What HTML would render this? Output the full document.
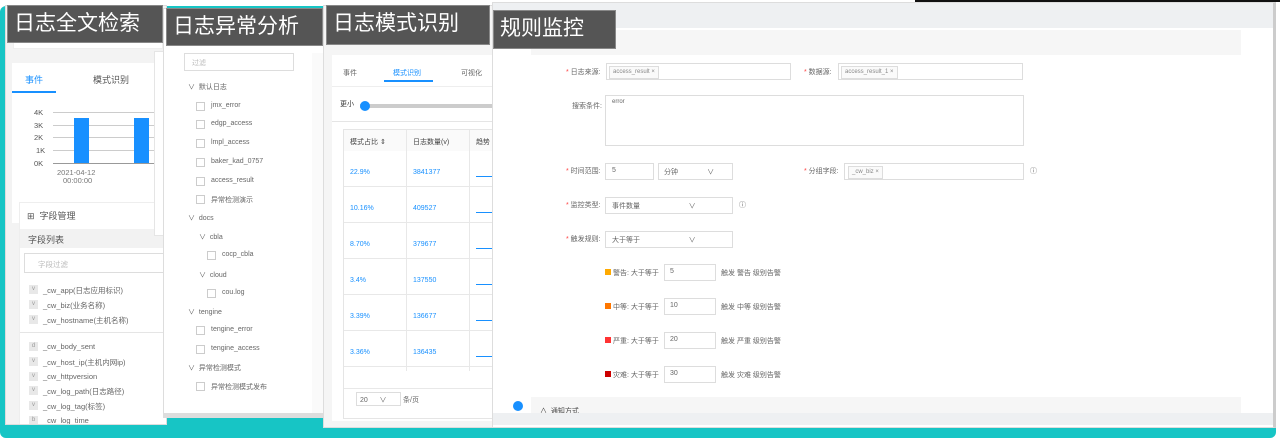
<!DOCTYPE html>
<html><head><meta charset="utf-8"><style>
*{margin:0;padding:0;box-sizing:border-box}
body{width:1280px;height:442px;position:relative;overflow:hidden;background:#fff;font-family:"Liberation Sans","Noto Sans CJK SC",sans-serif;font-size:7px;color:#666}
.a{position:absolute}
.lbl{position:absolute;background:#555;color:#fff;font-size:21px;line-height:36px;padding-left:6px;border:1px solid #888;white-space:nowrap;overflow:hidden}
.pn{position:absolute;background:#fff;overflow:hidden;border:1px solid #ddd}
.t{position:absolute;white-space:nowrap}
.cb{position:absolute;width:9px;height:9px;border:1px solid #ccc;background:#fff}
.inp{position:absolute;border:1px solid #ddd;background:#fff}
.tag{position:absolute;border:1px solid #ddd;background:#fafafa;font-size:6px;padding:0 3px;line-height:11px;color:#888}
.red{color:#f44}
.bd{position:absolute;width:9px;height:9px;background:#e8e8e8;color:#999;font-size:6px;text-align:center;line-height:9px}
.fl .t{font-size:7.5px}
</style></head><body>
<div class="a" style="left:0;top:6px;width:1276px;height:432px;background:#17c5c5;border-radius:6px"></div>
<div class="a" style="left:915px;top:0;width:365px;height:2px;background:#111"></div>

<!-- panel 1 -->
<div class="pn fl" style="left:5px;top:5px;width:162px;height:420px;background:#f3f3f3">
  <div class="a" style="left:7px;top:23px;width:150px;height:20px;background:#fff;border:1px solid #eee"></div>
  <div class="a" style="left:6px;top:57px;width:150px;height:160px;background:#fff"></div>
  <div class="t" style="left:19px;top:67px;color:#1890ff;font-size:9px">事件</div>
  <div class="t" style="left:87px;top:67px;font-size:9px;color:#555">模式识别</div>
  <div class="a" style="left:6px;top:85px;width:44px;height:2px;background:#1890ff"></div>
  <div class="t" style="left:28px;top:102px;color:#555">4K</div>
  <div class="t" style="left:28px;top:115px;color:#555">3K</div>
  <div class="t" style="left:28px;top:127px;color:#555">2K</div>
  <div class="t" style="left:30px;top:140px;color:#555">1K</div>
  <div class="t" style="left:28px;top:153px;color:#555">0K</div>
  <div class="a" style="left:47px;top:106px;width:110px;height:1px;background:#ccc"></div>
  <div class="a" style="left:47px;top:119px;width:110px;height:1px;background:#ccc"></div>
  <div class="a" style="left:47px;top:131px;width:110px;height:1px;background:#ccc"></div>
  <div class="a" style="left:47px;top:144px;width:110px;height:1px;background:#ccc"></div>
  <div class="a" style="left:47px;top:157px;width:110px;height:1px;background:#999"></div>
  <div class="a" style="left:68px;top:112px;width:15px;height:45px;background:#1890ff"></div>
  <div class="a" style="left:128px;top:112px;width:15px;height:45px;background:#1890ff"></div>
  <div class="t" style="left:51px;top:162px;color:#777">2021-04-12</div>
  <div class="t" style="left:57px;top:170px;color:#777">00:00:00</div>
  <div class="a" style="left:13px;top:196px;width:150px;height:224px;background:#fff;border:1px solid #eee"></div>
  <div class="t" style="left:21px;top:203px;font-size:9px;color:#555">⊞ &nbsp;字段管理</div>
  <div class="a" style="left:14px;top:223px;width:150px;height:19px;background:#f2f2f2"></div>
  <div class="t" style="left:22px;top:227px;font-size:9px;color:#555">字段列表</div>
  <div class="inp" style="left:18px;top:247px;width:150px;height:20px"></div>
  <div class="t" style="left:32px;top:253px;color:#bbb">字段过滤</div>
  <div class="bd" style="left:23px;top:279px">v</div><div class="t" style="left:37px;top:279px">_cw_app(日志应用标识)</div>
  <div class="bd" style="left:23px;top:294px">v</div><div class="t" style="left:37px;top:294px">_cw_biz(业务名称)</div>
  <div class="bd" style="left:23px;top:309px">v</div><div class="t" style="left:37px;top:309px">_cw_hostname(主机名称)</div>
  <div class="a" style="left:14px;top:326px;width:150px;height:1px;background:#e5e5e5"></div>
  <div class="bd" style="left:23px;top:336px">d</div><div class="t" style="left:37px;top:336px">_cw_body_sent</div>
  <div class="bd" style="left:23px;top:351px">v</div><div class="t" style="left:37px;top:351px">_cw_host_ip(主机内网ip)</div>
  <div class="bd" style="left:23px;top:366px">v</div><div class="t" style="left:37px;top:366px">_cw_httpversion</div>
  <div class="bd" style="left:23px;top:380px">v</div><div class="t" style="left:37px;top:380px">_cw_log_path(日志路径)</div>
  <div class="bd" style="left:23px;top:395px">v</div><div class="t" style="left:37px;top:395px">_cw_log_tag(标签)</div>
  <div class="bd" style="left:23px;top:410px">b</div><div class="t" style="left:37px;top:410px">_cw_log_time</div>
  <div class="a" style="left:148px;top:45px;width:14px;height:185px;background:#fff;border:1px solid #e5e5e5"></div>
</div>
<div class="lbl" style="left:7px;top:5px;width:156px;height:38px">日志全文检索</div>

<!-- panel 2 -->
<div class="pn" style="left:163px;top:8px;width:162px;height:410px;border-bottom:5px solid #ddd">
  <div class="inp" style="left:20px;top:44px;width:110px;height:18px"></div>
  <div class="t" style="left:28px;top:49px;color:#bbb">过滤</div>
  <div class="a" style="left:148px;top:44px;width:14px;height:360px;background:#fafafa"></div>
  <div class="t" style="left:24px;top:73px">∨ &nbsp;默认日志</div>
  <div class="cb" style="left:32px;top:93px"></div><div class="t" style="left:47px;top:93px">jmx_error</div>
  <div class="cb" style="left:32px;top:111px"></div><div class="t" style="left:47px;top:111px">edgp_access</div>
  <div class="cb" style="left:32px;top:130px"></div><div class="t" style="left:47px;top:130px">lmpl_access</div>
  <div class="cb" style="left:32px;top:149px"></div><div class="t" style="left:47px;top:149px">baker_kad_0757</div>
  <div class="cb" style="left:32px;top:168px"></div><div class="t" style="left:47px;top:168px">access_result</div>
  <div class="cb" style="left:32px;top:186px"></div><div class="t" style="left:47px;top:186px">异常检测演示</div>
  <div class="t" style="left:24px;top:204px">∨ &nbsp;docs</div>
  <div class="t" style="left:35px;top:223px">∨ &nbsp;cbla</div>
  <div class="cb" style="left:43px;top:242px"></div><div class="t" style="left:58px;top:242px">cocp_cbla</div>
  <div class="t" style="left:35px;top:261px">∨ &nbsp;cloud</div>
  <div class="cb" style="left:43px;top:280px"></div><div class="t" style="left:58px;top:280px">cou.log</div>
  <div class="t" style="left:24px;top:298px">∨ &nbsp;tengine</div>
  <div class="cb" style="left:32px;top:317px"></div><div class="t" style="left:47px;top:317px">tengine_error</div>
  <div class="cb" style="left:32px;top:336px"></div><div class="t" style="left:47px;top:336px">tengine_access</div>
  <div class="t" style="left:24px;top:354px">∨ &nbsp;异常检测模式</div>
  <div class="cb" style="left:32px;top:373px"></div><div class="t" style="left:47px;top:373px">异常检测模式发布</div>
</div>
<div class="lbl" style="left:166px;top:8px;width:157px;height:38px">日志异常分析</div>

<!-- panel 3 -->
<div class="pn" style="left:323px;top:5px;width:170px;height:423px;background:#f5f5f5">
  <div class="a" style="left:8px;top:49px;width:162px;height:366px;background:#fff"></div>
  <div class="t" style="left:19px;top:62px">事件</div>
  <div class="t" style="left:69px;top:62px;color:#1890ff">模式识别</div>
  <div class="t" style="left:137px;top:62px">可视化</div>
  <div class="a" style="left:60px;top:74px;width:49px;height:2px;background:#1890ff"></div>
  <div class="a" style="left:8px;top:80px;width:162px;height:1px;background:#eee"></div>
  <div class="t" style="left:16px;top:93px;color:#333">更小</div>
  <div class="a" style="left:36px;top:98px;width:134px;height:4px;background:#ccc"></div>
  <div class="a" style="left:36px;top:95px;width:10px;height:10px;border-radius:50%;background:#1890ff"></div>
  <div class="a" style="left:8px;top:115px;width:162px;height:1px;background:#e5e5e5"></div>
  <div class="a" style="left:19px;top:123px;width:151px;height:290px;background:#fff;border:1px solid #e5e5e5"></div>
  <div class="a" style="left:20px;top:124px;width:150px;height:21px;background:#fafafa"></div>
  <div class="t" style="left:26px;top:131px;color:#444">模式占比 ⇕</div>
  <div class="t" style="left:89px;top:131px;color:#444">日志数量(v)</div>
  <div class="t" style="left:152px;top:131px;color:#444">趋势</div>
  <div class="a" style="left:82px;top:124px;width:1px;height:240px;background:#e8e8e8"></div>
  <div class="a" style="left:145px;top:124px;width:1px;height:240px;background:#e8e8e8"></div>
  <div class="a" style="left:20px;top:145px;width:150px;height:220px;background:repeating-linear-gradient(#fff 0 35px,#e8e8e8 35px 36px)"></div>
  <div class="a" style="left:82px;top:145px;width:1px;height:220px;background:#e8e8e8"></div>
  <div class="a" style="left:145px;top:145px;width:1px;height:220px;background:#e8e8e8"></div>
  <div class="t" style="left:26px;top:163px;color:#1890ff">22.9%</div><div class="t" style="left:89px;top:163px;color:#1890ff">3841377</div><div class="a" style="left:152px;top:170px;width:18px;height:1px;background:#1890ff"></div>
  <div class="t" style="left:26px;top:199px;color:#1890ff">10.16%</div><div class="t" style="left:89px;top:199px;color:#1890ff">409527</div><div class="a" style="left:152px;top:206px;width:18px;height:1px;background:#1890ff"></div>
  <div class="t" style="left:26px;top:235px;color:#1890ff">8.70%</div><div class="t" style="left:89px;top:235px;color:#1890ff">379677</div><div class="a" style="left:152px;top:242px;width:18px;height:1px;background:#1890ff"></div>
  <div class="t" style="left:26px;top:271px;color:#1890ff">3.4%</div><div class="t" style="left:89px;top:271px;color:#1890ff">137550</div><div class="a" style="left:152px;top:278px;width:18px;height:1px;background:#1890ff"></div>
  <div class="t" style="left:26px;top:307px;color:#1890ff">3.39%</div><div class="t" style="left:89px;top:307px;color:#1890ff">136677</div><div class="a" style="left:152px;top:314px;width:18px;height:1px;background:#1890ff"></div>
  <div class="t" style="left:26px;top:343px;color:#1890ff">3.36%</div><div class="t" style="left:89px;top:343px;color:#1890ff">136435</div><div class="a" style="left:152px;top:350px;width:18px;height:1px;background:#1890ff"></div>
  <div class="a" style="left:20px;top:382px;width:150px;height:1px;background:#e8e8e8"></div>
  <div class="inp" style="left:32px;top:386px;width:45px;height:14px"></div>
  <div class="t" style="left:36px;top:389px">20 &nbsp;&nbsp;&nbsp;&nbsp;&nbsp;∨</div>
  <div class="t" style="left:79px;top:389px">条/页</div>
</div>
<div class="lbl" style="left:326px;top:5px;width:164px;height:40px">日志模式识别</div>

<!-- panel 4 -->
<div class="pn" style="left:492px;top:2px;width:784px;height:426px;border-right:3px solid #ccc">
  <div class="a" style="left:0;top:0;width:784px;height:25px;background:#eef0f2"></div>
  <div class="a" style="left:38px;top:27px;width:710px;height:25px;background:#f6f6f6"></div>
  <div class="t" style="left:73px;top:64px"><span class="red">*</span> 日志来源:</div>
  <div class="inp" style="left:113px;top:60px;width:185px;height:17px"></div><div class="tag" style="left:116px;top:63px">access_result ×</div>
  <div class="t" style="left:311px;top:64px"><span class="red">*</span> 数据源:</div>
  <div class="inp" style="left:345px;top:60px;width:185px;height:17px"></div><div class="tag" style="left:348px;top:63px">access_result_1 ×</div>
  <div class="t" style="left:79px;top:98px">搜索条件:</div>
  <div class="inp" style="left:112px;top:92px;width:419px;height:51px"></div>
  <div class="t" style="left:119px;top:96px;font-size:6px">error</div>
  <div class="t" style="left:73px;top:163px"><span class="red">*</span> 时间范围:</div>
  <div class="inp" style="left:112px;top:160px;width:49px;height:17px"></div><div class="t" style="left:119px;top:164px">5</div>
  <div class="inp" style="left:165px;top:160px;width:75px;height:17px"></div><div class="t" style="left:171px;top:164px">分钟 &nbsp;&nbsp;&nbsp;&nbsp;&nbsp;&nbsp;&nbsp;&nbsp;&nbsp;&nbsp;&nbsp;&nbsp;&nbsp;&nbsp;∨</div>
  <div class="t" style="left:311px;top:163px"><span class="red">*</span> 分组字段:</div>
  <div class="inp" style="left:351px;top:160px;width:180px;height:17px"></div><div class="tag" style="left:355px;top:163px">_cw_biz ×</div>
  <div class="t" style="left:537px;top:163px">ⓘ</div>
  <div class="t" style="left:73px;top:197px"><span class="red">*</span> 监控类型:</div>
  <div class="inp" style="left:112px;top:194px;width:128px;height:17px"></div><div class="t" style="left:119px;top:198px">事件数量 &nbsp;&nbsp;&nbsp;&nbsp;&nbsp;&nbsp;&nbsp;&nbsp;&nbsp;&nbsp;&nbsp;&nbsp;&nbsp;&nbsp;&nbsp;&nbsp;&nbsp;&nbsp;&nbsp;&nbsp;&nbsp;&nbsp;&nbsp;&nbsp;∨</div>
  <div class="t" style="left:246px;top:197px">ⓘ</div>
  <div class="t" style="left:73px;top:231px"><span class="red">*</span> 触发规则:</div>
  <div class="inp" style="left:112px;top:228px;width:128px;height:17px"></div><div class="t" style="left:119px;top:232px">大于等于 &nbsp;&nbsp;&nbsp;&nbsp;&nbsp;&nbsp;&nbsp;&nbsp;&nbsp;&nbsp;&nbsp;&nbsp;&nbsp;&nbsp;&nbsp;&nbsp;&nbsp;&nbsp;&nbsp;&nbsp;&nbsp;&nbsp;&nbsp;&nbsp;∨</div>
  <div class="a" style="left:112px;top:266px;width:6px;height:6px;background:#fa0"></div><div class="t" style="left:120px;top:265px">警告: 大于等于</div>
  <div class="inp" style="left:171px;top:261px;width:52px;height:17px"></div><div class="t" style="left:177px;top:265px">5</div><div class="t" style="left:228px;top:265px">触发 警告 级别告警</div>
  <div class="a" style="left:112px;top:300px;width:6px;height:6px;background:#f70"></div><div class="t" style="left:120px;top:299px">中等: 大于等于</div>
  <div class="inp" style="left:171px;top:295px;width:52px;height:17px"></div><div class="t" style="left:177px;top:299px">10</div><div class="t" style="left:228px;top:299px">触发 中等 级别告警</div>
  <div class="a" style="left:112px;top:334px;width:6px;height:6px;background:#f33"></div><div class="t" style="left:120px;top:333px">严重: 大于等于</div>
  <div class="inp" style="left:171px;top:329px;width:52px;height:17px"></div><div class="t" style="left:177px;top:333px">20</div><div class="t" style="left:228px;top:333px">触发 严重 级别告警</div>
  <div class="a" style="left:112px;top:368px;width:6px;height:6px;background:#c00"></div><div class="t" style="left:120px;top:367px">灾难: 大于等于</div>
  <div class="inp" style="left:171px;top:363px;width:52px;height:17px"></div><div class="t" style="left:177px;top:367px">30</div><div class="t" style="left:228px;top:367px">触发 灾难 级别告警</div>
  <div class="a" style="left:38px;top:394px;width:710px;height:16px;background:#f6f6f6"></div>
  <div class="a" style="left:20px;top:398px;width:10px;height:10px;border-radius:50%;background:#1890ff"></div>
  <div class="t" style="left:47px;top:403px;color:#444">∧ &nbsp;通知方式</div>
  <div class="a" style="left:0;top:410px;width:784px;height:12px;background:#eef0f2"></div>
</div>
<div class="lbl" style="left:493px;top:10px;width:123px;height:39px">规则监控</div>
</body></html>
